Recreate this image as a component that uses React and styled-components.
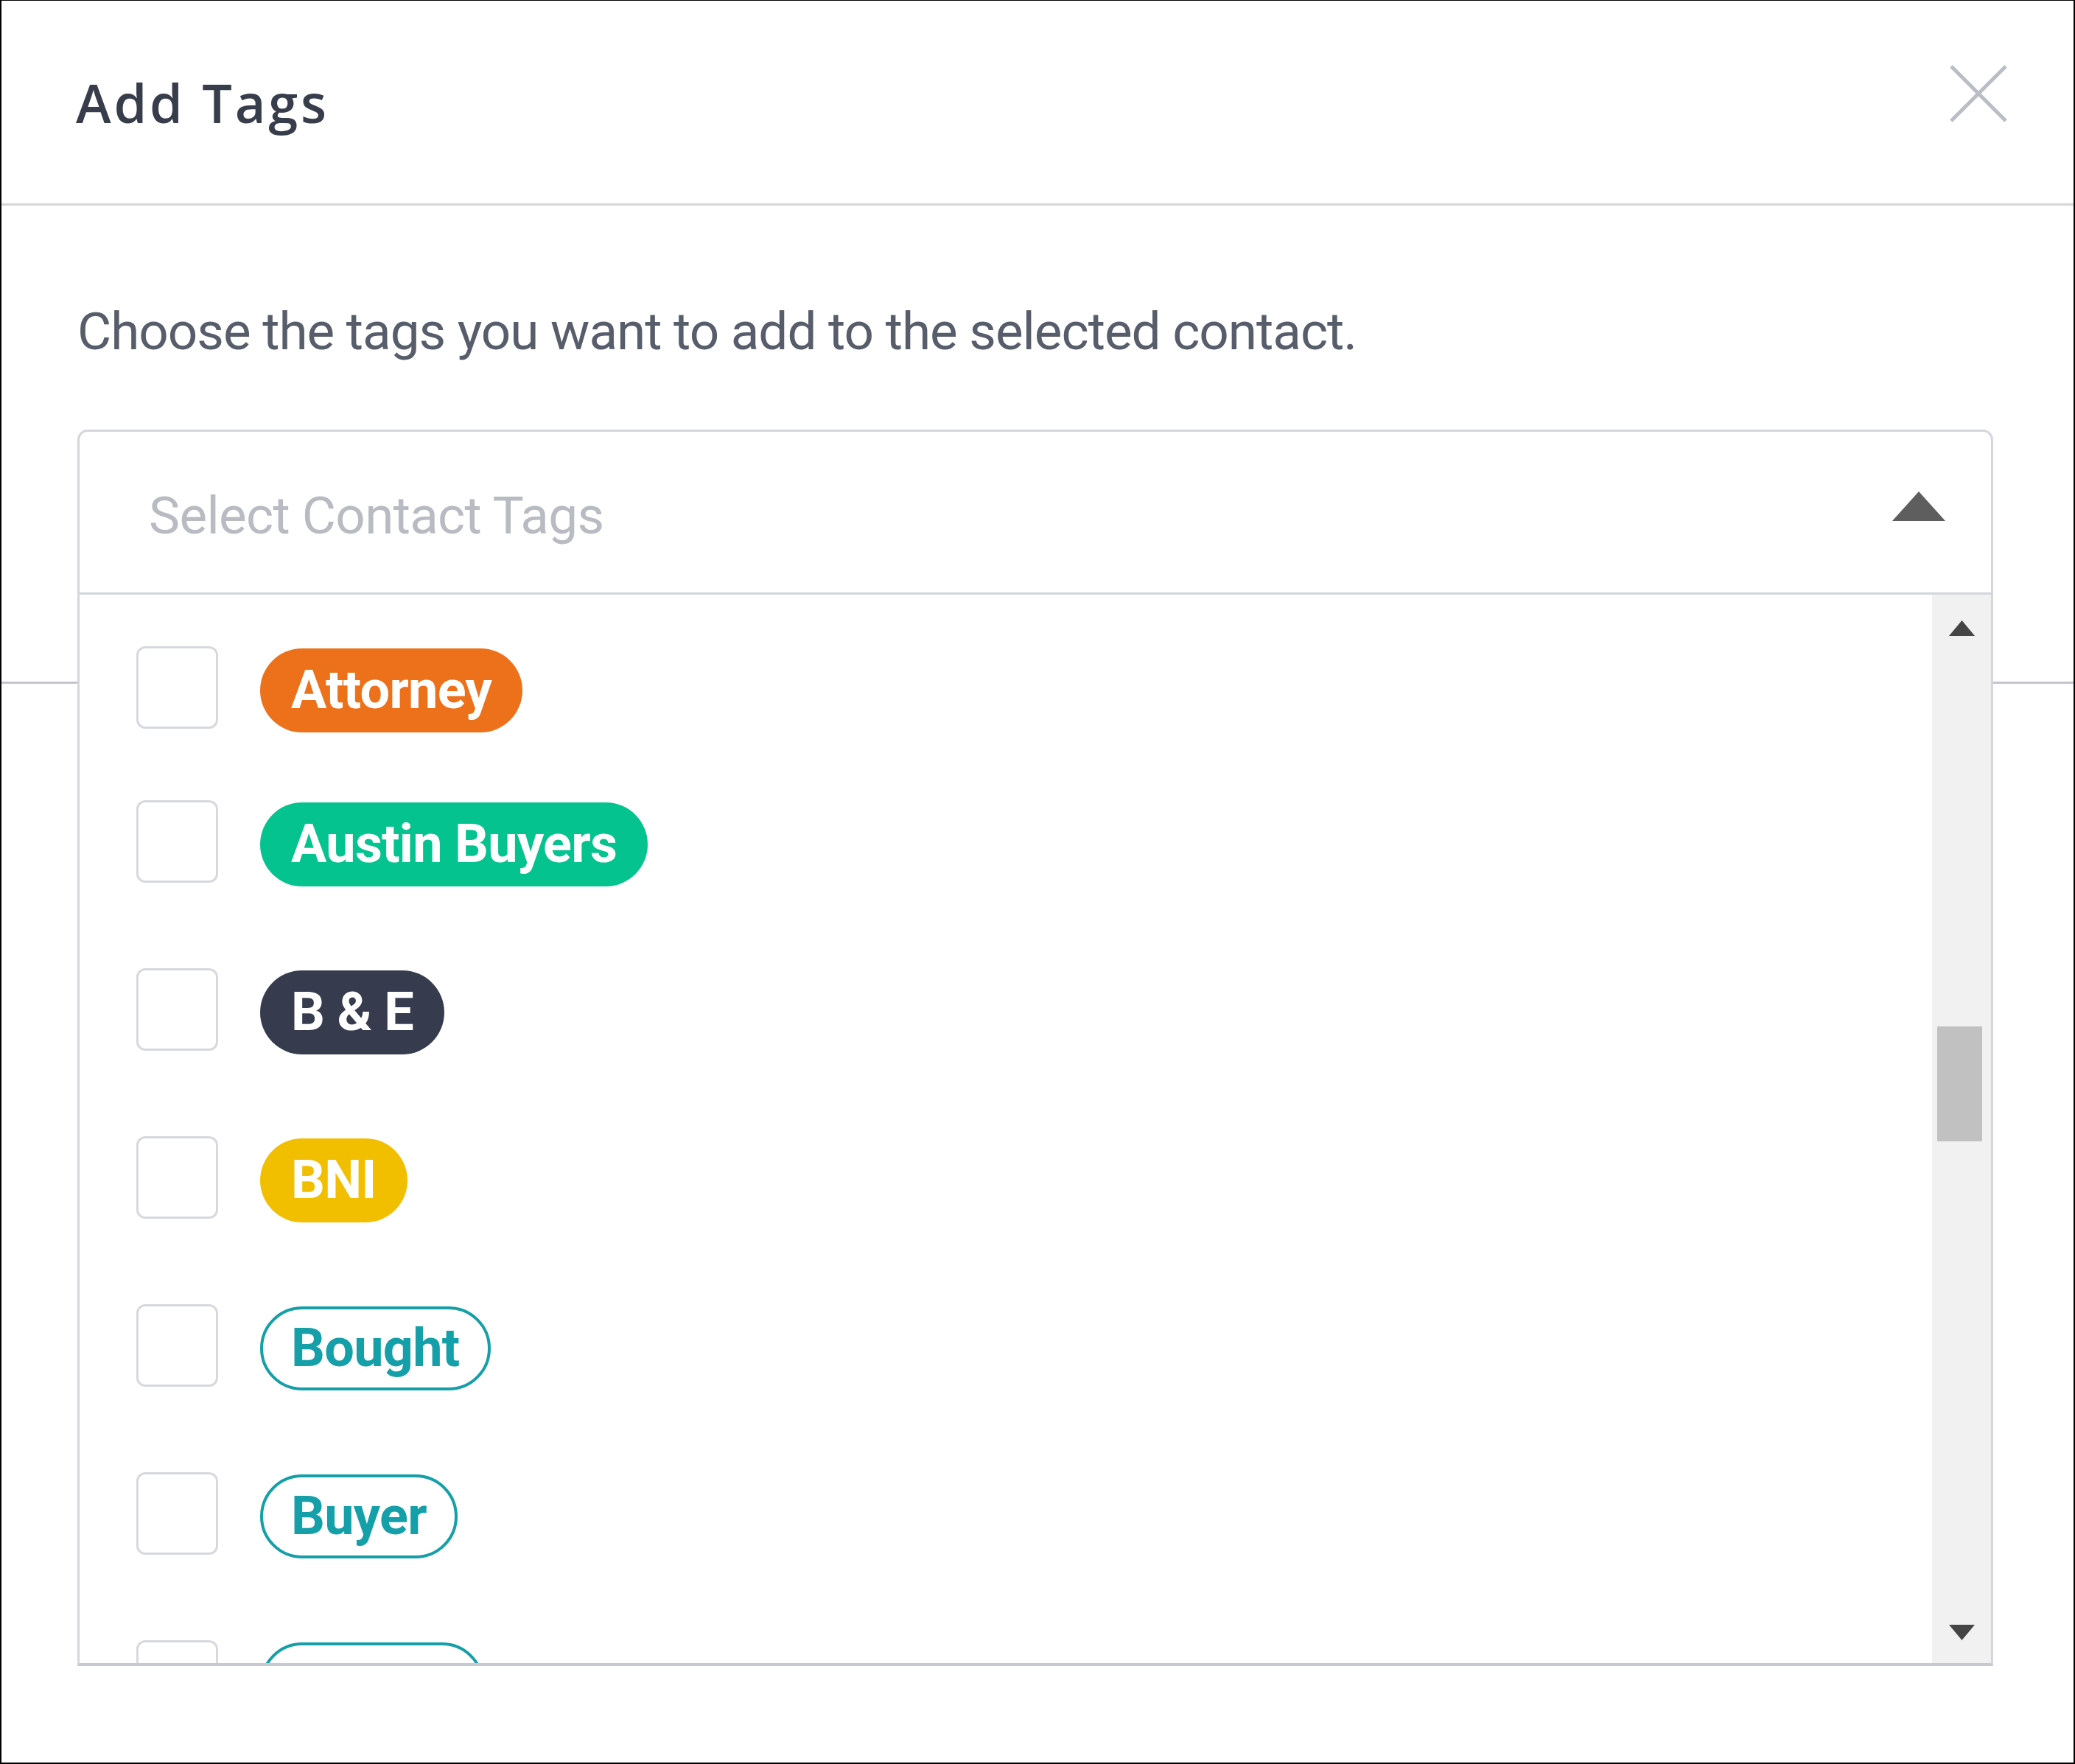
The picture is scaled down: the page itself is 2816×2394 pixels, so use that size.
import React from "react";
import styled, { createGlobalStyle } from "styled-components";

const GlobalStyle = createGlobalStyle`
  html, body {
    margin: 0;
    padding: 0;
    background: #ffffff;
  }
  * { box-sizing: border-box; }
`;

const Page = styled.div`
  width: 2816px;
  height: 2394px;
  border: 2px solid #000;
  border-top-width: 1px;
  background: #fff;
  display: flex;
  flex-direction: column;
  font-family: Roboto, "Liberation Sans", Arial, sans-serif;
  overflow: hidden;
`;

const Header = styled.header`
  height: 278px;
  flex: none;
  display: flex;
  align-items: flex-start;
  justify-content: space-between;
  padding: 86px 89px 0 101px;
  border-bottom: 3px solid #d3d7dc;
`;

const Title = styled.h1`
  margin: 16px 0 0 0;
  font-family: "Open Sans", Roboto, sans-serif;
  font-weight: 600;
  font-size: 72px;
  line-height: 72px;
  letter-spacing: 3.8px;
  color: #383d4b;
`;

const CloseButton = styled.button`
  width: 80px;
  height: 80px;
  padding: 0;
  border: 0;
  background: transparent;
  cursor: pointer;
  display: flex;
`;

const Body = styled.section`
  flex: none;
  padding: 128px 109px 118px 103px;
  border-bottom: 3px solid #c3c7cd;
`;

const Description = styled.p`
  margin: 0 0 90px 0;
  font-size: 71px;
  line-height: 86px;
  font-weight: 400;
  letter-spacing: -1px;
  color: #575d6a;
`;

const SelectWrap = styled.div`
  position: relative;
`;

const SelectHeader = styled.div`
  height: 224px;
  border: 3px solid #d3d7dd;
  border-radius: 14px 14px 0 0;
  display: flex;
  align-items: center;
  justify-content: space-between;
  padding: 0 62px 0 94px;
  background: #fff;
`;

const Placeholder = styled.span`
  margin-top: 10px;
  font-size: 71px;
  line-height: 86px;
  letter-spacing: -0.7px;
  color: #b8bbc2;
`;

const Caret = styled.svg`
  width: 72px;
  height: 40px;
  margin-bottom: 16px;
  display: block;
`;

const Menu = styled.div`
  position: absolute;
  top: 100%;
  left: 0;
  right: 0;
  height: 1454px;
  background: #fff;
  border: 3px solid #d3d7dd;
  border-top: 0;
  border-bottom: 4px solid #c6cad0;
  display: flex;
  z-index: 2;
`;

const Options = styled.div`
  flex: 1;
  overflow: hidden;
  padding-top: 35px;
  display: flex;
  flex-direction: column;
`;

const Row = styled.label`
  flex: none;
  height: ${(p) => (p.$compact ? 190 : 228)}px;
  display: flex;
  align-items: center;
  gap: 57px;
  padding-left: 77px;
`;

const Checkbox = styled.span`
  width: 111px;
  height: 112px;
  margin-bottom: 8px;
  border: 3px solid #d6d9de;
  border-radius: 12px;
  background: #fff;
  flex: none;
`;

const Pill = styled.span`
  height: 114px;
  display: inline-flex;
  align-items: center;
  padding: 0 ${(p) => (p.$outline ? 38 : 42)}px;
  border-radius: 57px;
  font-weight: 700;
  font-size: 72px;
  line-height: 1;
  letter-spacing: -0.7px;
  white-space: nowrap;
  background: ${(p) => (p.$outline ? "#ffffff" : p.$color)};
  color: ${(p) => (p.$outline ? p.$color : "#ffffff")};
  border: ${(p) => (p.$outline ? `4px solid ${p.$color}` : "0")};
`;

const Scrollbar = styled.div`
  width: 80px;
  flex: none;
  background: #f1f1f1;
  display: flex;
  flex-direction: column;
  align-items: center;
`;

const Arrow = styled.svg`
  width: 35px;
  height: 21px;
  display: block;
  flex: none;
  margin: ${(p) => (p.$down ? "0 0 31px 0" : "35px 0 0 0")};
`;

const Thumb = styled.div`
  width: 61px;
  height: 156px;
  margin: 530px 5px 0 0;
  background: #c1c1c1;
  flex: none;
`;

const Spacer = styled.div`
  flex: 1;
`;

const Footer = styled.div`
  flex: 1;
`;

const tags = [
  { label: "Attorney", color: "#ec711a" },
  { label: "Austin Buyers", color: "#04c38f" },
  { label: "B & E", color: "#363c4e" },
  { label: "BNI", color: "#f2be00" },
  { label: "Bought", color: "#159fa8", outline: true },
  { label: "Buyer", color: "#159fa8", outline: true },
  { label: "Buyers", color: "#159fa8", outline: true },
];

export default function App() {
  return (
    <>
      <GlobalStyle />
      <Page>
        <Header>
          <Title>Add Tags</Title>
          <CloseButton aria-label="Close">
            <svg width="80" height="80" viewBox="0 0 80 80">
              <path
                d="M3 3 L77 77 M77 3 L3 77"
                stroke="#b9bdc5"
                strokeWidth="5"
                fill="none"
              />
            </svg>
          </CloseButton>
        </Header>
        <Body>
          <Description>
            Choose the tags you want to add to the selected contact.
          </Description>
          <SelectWrap>
            <SelectHeader>
              <Placeholder>Select Contact Tags</Placeholder>
              <Caret viewBox="0 0 72 40">
                <path d="M36 0 L72 40 L0 40 Z" fill="#5e5e5e" />
              </Caret>
            </SelectHeader>
            <Menu>
              <Options>
                {tags.map((t, i) => (
                  <Row key={t.label} $compact={i === 0}>
                    <Checkbox />
                    <Pill $color={t.color} $outline={t.outline}>
                      {t.label}
                    </Pill>
                  </Row>
                ))}
              </Options>
              <Scrollbar>
                <Arrow viewBox="0 0 35 21">
                  <path d="M17.5 0 L35 21 L0 21 Z" fill="#454545" />
                </Arrow>
                <Thumb />
                <Spacer />
                <Arrow viewBox="0 0 35 21" $down>
                  <path d="M0 0 L35 0 L17.5 21 Z" fill="#454545" />
                </Arrow>
              </Scrollbar>
            </Menu>
          </SelectWrap>
        </Body>
        <Footer />
      </Page>
    </>
  );
}
